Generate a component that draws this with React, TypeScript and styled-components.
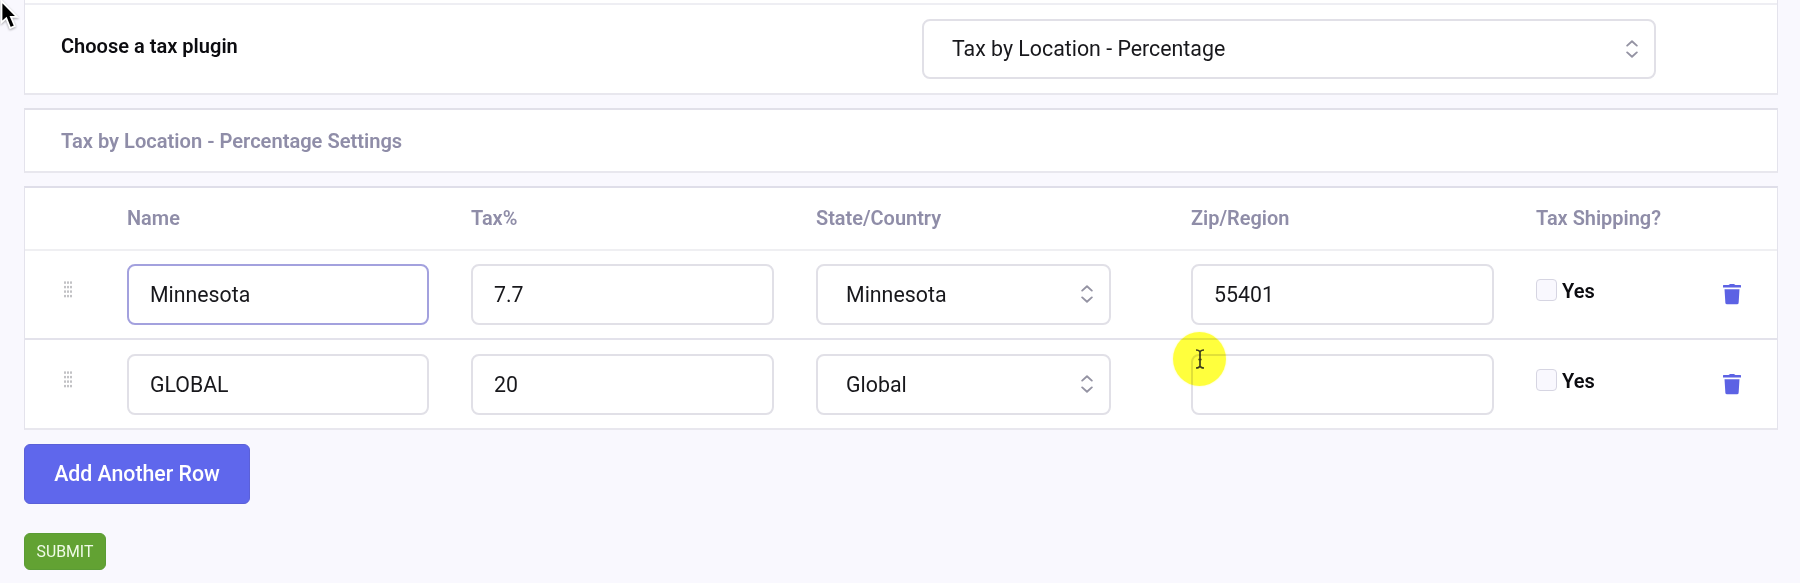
import React from "react";
import styled, { createGlobalStyle } from "styled-components";

const GlobalStyle = createGlobalStyle`
  * { box-sizing: border-box; }
  body {
    margin: 0;
    background: #f9f8fe;
    font-family: Roboto, "Liberation Sans", sans-serif;
    color: #18181c;
  }
  button, input { font-family: inherit; }
`;

const Page = styled.main`
  position: relative;
  height: 583px;
  padding: 0 22px 0 24px;
  overflow: hidden;
`;

const Panel = styled.section`
  background: #fff;
  border: 1px solid #e4e3ec;
  border-bottom: 2px solid #e8e7ee;
`;

const PluginPanel = styled(Panel)`
  height: 95px;
  padding-top: 3px;
  border-top: 0;
`;

const PluginRow = styled.div`
  display: flex;
  justify-content: space-between;
  height: 90px;
  padding: 14px 121px 0 36px;
  border-top: 2px solid #eeeef3;
`;

const PluginLabel = styled.label`
  padding-top: 14px;
  font-size: 20.05px;
  line-height: 26px;
  font-weight: 600;
  color: #0c0c10;
`;

const TitlePanel = styled(Panel)`
  display: flex;
  align-items: center;
  height: 65px;
  margin-top: 13px;
  padding: 0 36px;
  border-top: 2px solid #e1e0e9;
`;

const Title = styled.h2`
  margin: 0;
  font-size: 20.1px;
  line-height: 26px;
  font-weight: 600;
  color: #8f8da8;
`;

const TablePanel = styled(Panel)`
  height: 244px;
  margin-top: 13px;
  border-top: 2px solid #dfdee9;
`;

const Row = styled.div`
  display: grid;
  grid-template-columns: 102px 344px 345px 375px 345px 187px 1fr;
`;

const HeaderRow = styled(Row)`
  height: 63px;
  padding-top: 17px;
  border-bottom: 2px solid #efeff2;
`;

const HeaderCell = styled.span`
  font-size: 19.95px;
  line-height: 27px;
  font-weight: 600;
  color: #8f8da8;
`;

const TaxRow = styled(Row)<{ $divided?: boolean }>`
  height: ${(p) => (p.$divided ? 89 : 90)}px;
  padding-top: ${(p) => (p.$divided ? 13 : 14)}px;
  border-bottom: ${(p) => (p.$divided ? "2px solid #e3e2eb" : "0")};
`;

const Field = styled.input<{ $active?: boolean; $width?: number }>`
  width: ${(p) => p.$width ?? 303}px;
  height: 61px;
  padding: 0 21px 1px;
  border: 2px solid ${(p) => (p.$active ? "#a3a1de" : "#e1e0e7")};
  border-radius: 8px;
  outline: 0;
  background: #fff;
  font-size: 21.3px;
  color: #18181c;
`;

const SelectBox = styled.div<{ $width: number; $height?: number }>`
  display: flex;
  align-items: center;
  justify-content: space-between;
  width: ${(p) => p.$width}px;
  height: ${(p) => p.$height ?? 61}px;
  padding: 0 16px 1px 28px;
  border: 2px solid #e1e0e7;
  border-radius: 8px;
  background: #fff;
  font-size: 21.35px;
`;

const HandleCell = styled.div`
  padding: 17px 0 0 39px;
`;

const CheckLabel = styled.label`
  display: flex;
  align-items: flex-start;
  gap: 5px;
  padding-top: 15px;
  font-size: 20px;
  line-height: 24px;
  font-weight: 600;
  color: #0c0c10;
`;

const CheckBox = styled.input`
  appearance: none;
  width: 21px;
  height: 22px;
  margin: 0;
  border: 1px solid #d6d5e2;
  border-radius: 4px;
  background: #f9f8fe;
`;

const DeleteButton = styled.button`
  width: 18px;
  height: 21px;
  margin: 20px 0 0;
  padding: 0;
  border: 0;
  background: none;
`;

const Actions = styled.div`
  display: flex;
  flex-direction: column;
  align-items: flex-start;
  gap: 29px;
  margin-top: 14px;
`;

const AddButton = styled.button`
  width: 226px;
  height: 60px;
  padding: 0 0 1px;
  border: 1px solid #5b60d8;
  border-radius: 6px;
  background: #5f67ec;
  color: #fff;
  font-size: 21.3px;
  font-weight: 500;
`;

const SubmitButton = styled.button`
  width: 82px;
  height: 37px;
  padding: 0 0 1px;
  border: 1px solid #5b9c35;
  border-radius: 6px;
  background: #62a233;
  color: #f0fbe8;
  font-size: 15.8px;
`;

const Pointer = styled.svg`
  position: absolute;
  left: 0;
  top: 0;
`;

const PointerShape = styled.path`
  filter: drop-shadow(0 1.5px 1.2px rgba(0, 0, 0, 0.35));
`;

const TextCursor = styled.div`
  position: absolute;
  left: 1173px;
  top: 332px;
  display: grid;
  place-items: center;
  width: 53px;
  height: 54px;
  border-radius: 50%;
  background: rgba(255, 255, 0, 0.76);
  mix-blend-mode: multiply;
  box-shadow: 0 0 2px rgba(255, 255, 60, 0.5);
`;

const Chevrons = () => (
  <svg width="12" height="18" viewBox="0 0 12 18" fill="none" stroke="#9493a3" strokeWidth="1.9" strokeLinecap="round" strokeLinejoin="round">
    <path d="M1.2 5.6 6 1.3 10.8 5.6M1.2 12.4 6 16.7 10.8 12.4" />
  </svg>
);

const Handle = () => (
  <svg width="8" height="17" viewBox="0 0 8 17" fill="#c2c2c5">
    {[0.4, 4.9, 9.4, 13.9].map((y) =>
      [0, 3, 6].map((x) => <rect key={`${x}-${y}`} x={x} y={y} width="2" height="2.4" />)
    )}
  </svg>
);

const TrashIcon = styled.svg`
  display: block;
`;

const Trash = () => (
  <TrashIcon width="18" height="21" viewBox="0 0 18 21" fill="#5c62e4">
    <path d="M0 1.5Q0 1 .6 1H5.6L6.3.4Q6.6 0 7.1 0H10.9Q11.4 0 11.7.4L12.4 1H17.4Q18 1 18 1.5V3.4H0Z" />
    <path d="M1.5 5.2H16.5L15.6 18.9Q15.4 20.3 14 20.3H4Q2.6 20.3 2.4 18.9Z" />
  </TrashIcon>
);

const rows = [
  { name: "Minnesota", tax: "7.7", state: "Minnesota", zip: "55401", active: true },
  { name: "GLOBAL", tax: "20", state: "Global", zip: "", active: false },
];

export default function App() {
  return (
    <>
      <GlobalStyle />
      <Page>
        <PluginPanel>
          <PluginRow>
            <PluginLabel>Choose a tax plugin</PluginLabel>
            <SelectBox $width={734} $height={60}>
              Tax by Location - Percentage
              <Chevrons />
            </SelectBox>
          </PluginRow>
        </PluginPanel>

        <TitlePanel>
          <Title>Tax by Location - Percentage Settings</Title>
        </TitlePanel>

        <TablePanel>
          <HeaderRow>
            <span />
            <HeaderCell>Name</HeaderCell>
            <HeaderCell>Tax%</HeaderCell>
            <HeaderCell>State/Country</HeaderCell>
            <HeaderCell>Zip/Region</HeaderCell>
            <HeaderCell>Tax Shipping?</HeaderCell>
          </HeaderRow>
          {rows.map((row, i) => (
            <TaxRow key={row.name} $divided={i < rows.length - 1}>
              <HandleCell>
                <Handle />
              </HandleCell>
              <Field defaultValue={row.name} $active={row.active} $width={302} />
              <Field defaultValue={row.tax} />
              <SelectBox $width={295}>
                {row.state}
                <Chevrons />
              </SelectBox>
              <Field defaultValue={row.zip} />
              <CheckLabel>
                <CheckBox type="checkbox" />
                Yes
              </CheckLabel>
              <DeleteButton aria-label="Delete row">
                <Trash />
              </DeleteButton>
            </TaxRow>
          ))}
        </TablePanel>

        <Actions>
          <AddButton>Add Another Row</AddButton>
          <SubmitButton>SUBMIT</SubmitButton>
        </Actions>

        <TextCursor>
          <svg width="10" height="20" viewBox="0 0 10 20" fill="none" stroke="#3c3c1c" strokeWidth="1.7">
            <path d="M1 1Q4.2 1 5 3Q5.8 1 9 1M1 19Q4.2 19 5 17Q5.8 19 9 19M5 3V17M3.4 10.5H6.6" />
          </svg>
        </TextCursor>

        <Pointer width="22" height="34" viewBox="0 0 22 34">
          <PointerShape d="M1.5 1V22.5L6.3 18.2L10.2 28L14.8 26L10.9 16.8H17Z" fill="#000" stroke="#fff" strokeWidth="1.8" />
        </Pointer>
      </Page>
    </>
  );
}
